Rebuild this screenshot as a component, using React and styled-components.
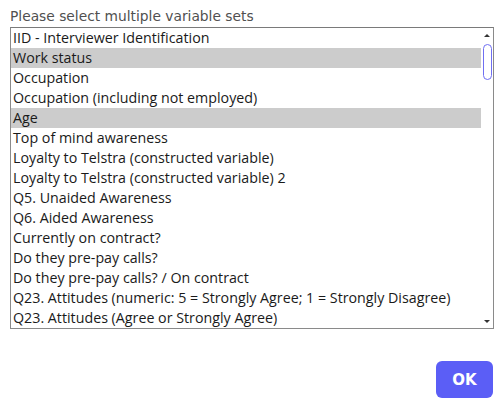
import React, { useState } from 'react';
import styled, { createGlobalStyle } from 'styled-components';

const GlobalStyle = createGlobalStyle`
  html, body {
    margin: 0;
    padding: 0;
    background: #fff;
  }
  body {
    font-family: 'Open Sans', sans-serif;
  }
`;

const variableSets = [
  'IID - Interviewer Identification',
  'Work status',
  'Occupation',
  'Occupation (including not employed)',
  'Age',
  'Top of mind awareness',
  'Loyalty to Telstra (constructed variable)',
  'Loyalty to Telstra (constructed variable) 2',
  'Q5. Unaided Awareness',
  'Q6. Aided Awareness',
  'Currently on contract?',
  'Do they pre-pay calls?',
  'Do they pre-pay calls? / On contract',
  'Q23. Attitudes (numeric: 5 = Strongly Agree; 1 = Strongly Disagree)',
  'Q23. Attitudes (Agree or Strongly Agree)',
];

const Page = styled.div`
  width: 502px;
  height: 406px;
  box-sizing: border-box;
  padding: 6px 8px 8px 10px;
  display: flex;
  flex-direction: column;
`;

const Heading = styled.div`
  font-family: 'DejaVu Sans', sans-serif;
  font-size: 13.8px;
  line-height: 20px;
  color: #505050;
  height: 21px;
  white-space: nowrap;
`;

const ListBox = styled.div`
  display: flex;
  width: 484px;
  height: 302px;
  box-sizing: border-box;
  border: 1px solid #8a8a8a;
  border-top-color: #7a7a7a;
`;

const Options = styled.div`
  flex: 1;
  overflow: hidden;
`;

const Option = styled.div`
  height: 20px;
  line-height: 20px;
  padding-left: 2px;
  font-size: 14.25px;
  color: #1a1a1a;
  white-space: nowrap;
  background: ${(p) => (p.selected ? '#cccccc' : 'transparent')};
  cursor: default;
`;

const Track = styled.div`
  width: 12px;
  display: flex;
  flex-direction: column;
  align-items: center;
  padding: 6px 0 5px;
  box-sizing: border-box;
`;

const Arrow = styled.div`
  width: 0;
  height: 0;
  border-left: 3px solid transparent;
  border-right: 3px solid transparent;
  ${(p) =>
    p.down
      ? 'border-top: 3px solid #333; margin-top: auto;'
      : 'border-bottom: 3px solid #333;'}
`;

const Thumb = styled.div`
  margin-top: 7px;
  width: 9px;
  height: 36px;
  box-sizing: border-box;
  border: 1.5px solid #6f6ff2;
  border-radius: 5px;
  background: #fff;
`;

const Footer = styled.div`
  margin-top: auto;
  display: flex;
  justify-content: flex-end;
  padding-right: 1px;
`;

const OkButton = styled.button`
  width: 57px;
  height: 37px;
  border: none;
  border-radius: 6px;
  background: #5b5ef6;
  color: #fff;
  font-family: 'DejaVu Sans', sans-serif;
  font-weight: bold;
  font-size: 15px;
  padding: 0;
  cursor: pointer;
`;

const App = () => {
  const [selected, setSelected] = useState(['Work status', 'Age']);

  const toggle = (name) =>
    setSelected((prev) =>
      prev.includes(name) ? prev.filter((n) => n !== name) : [...prev, name]
    );

  return (
    <>
      <GlobalStyle />
      <Page>
        <Heading>Please select multiple variable sets</Heading>
        <ListBox>
          <Options>
            {variableSets.map((name) => (
              <Option
                key={name}
                selected={selected.includes(name)}
                onClick={() => toggle(name)}
              >
                {name}
              </Option>
            ))}
          </Options>
          <Track>
            <Arrow />
            <Thumb />
            <Arrow down />
          </Track>
        </ListBox>
        <Footer>
          <OkButton type="button">OK</OkButton>
        </Footer>
      </Page>
    </>
  );
};

export default App;
